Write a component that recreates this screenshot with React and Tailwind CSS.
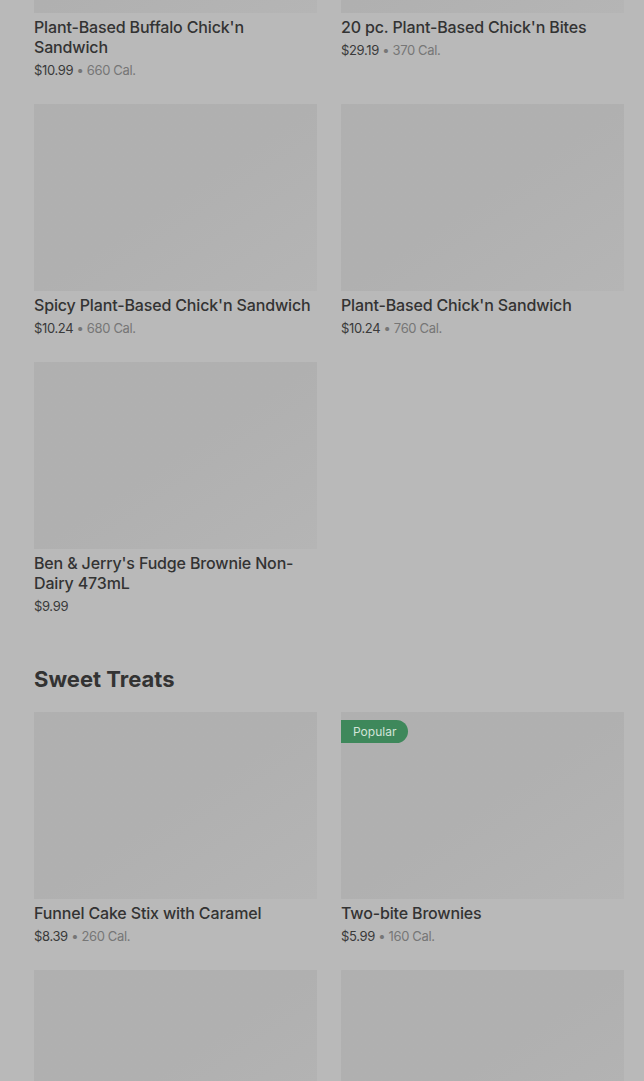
const rowsTop = [
  { title: "Plant-Based Buffalo Chick'n Sandwich", price: '$10.99', cal: '660 Cal.' },
  { title: "20 pc. Plant-Based Chick'n Bites", price: '$29.19', cal: '370 Cal.' },
  { title: "Spicy Plant-Based Chick'n Sandwich", price: '$10.24', cal: '680 Cal.' },
  { title: "Plant-Based Chick'n Sandwich", price: '$10.24', cal: '760 Cal.' },
  { title: "Ben & Jerry's Fudge Brownie Non-Dairy 473mL", price: '$9.99' },
];

const sweets = [
  { title: 'Funnel Cake Stix with Caramel', price: '$8.39', cal: '260 Cal.' },
  { title: 'Two-bite Brownies', price: '$5.99', cal: '160 Cal.', popular: true },
  { title: '', price: '' },
  { title: '', price: '' },
];

function Card({ item }) {
  return (
    <div className="flex flex-col">
      <div className="relative h-[187px] bg-gradient-to-br from-[#b0b0b0] via-[#b0b0b0] to-[#b5b5b5]">
        {item.popular && (
          <span className="absolute left-0 top-[8px] h-[23px] px-[12px] flex items-center rounded-r-full bg-[#3e885b] text-[12px] text-[#d3e4d9]">
            Popular
          </span>
        )}
      </div>
      {item.title && (
        <div className="mt-[4px] text-[16px] leading-[20px] font-medium tracking-[-0.15px] text-[#333333]">
          {item.title}
        </div>
      )}
      {item.price && (
        <div className="mt-[3px] text-[13px] leading-[20px] tracking-[-0.35px] text-[#3a3a3a]">
          {item.price}
          {item.cal && <span className="text-[#767676]"> • {item.cal}</span>}
        </div>
      )}
    </div>
  );
}

export default function App() {
  return (
    <div
      className="min-h-screen h-[1081px] overflow-hidden bg-[#b9b9b9] pl-[34px] pr-[20px]"
      style={{ fontFamily: 'Inter, "Noto Sans", sans-serif' }}
    >
      <div className="mt-[-174px] grid grid-cols-2 gap-x-[24px] gap-y-[24px]">
        {rowsTop.map((item, i) => (
          <Card key={i} item={item} />
        ))}
      </div>
      <h2 className="mt-[49px] mb-[19px] text-[22px] leading-[28px] font-bold text-[#333333]">Sweet Treats</h2>
      <div className="grid grid-cols-2 gap-x-[24px] gap-y-[24px]">
        {sweets.map((item, i) => (
          <Card key={i} item={item} />
        ))}
      </div>
    </div>
  );
}
